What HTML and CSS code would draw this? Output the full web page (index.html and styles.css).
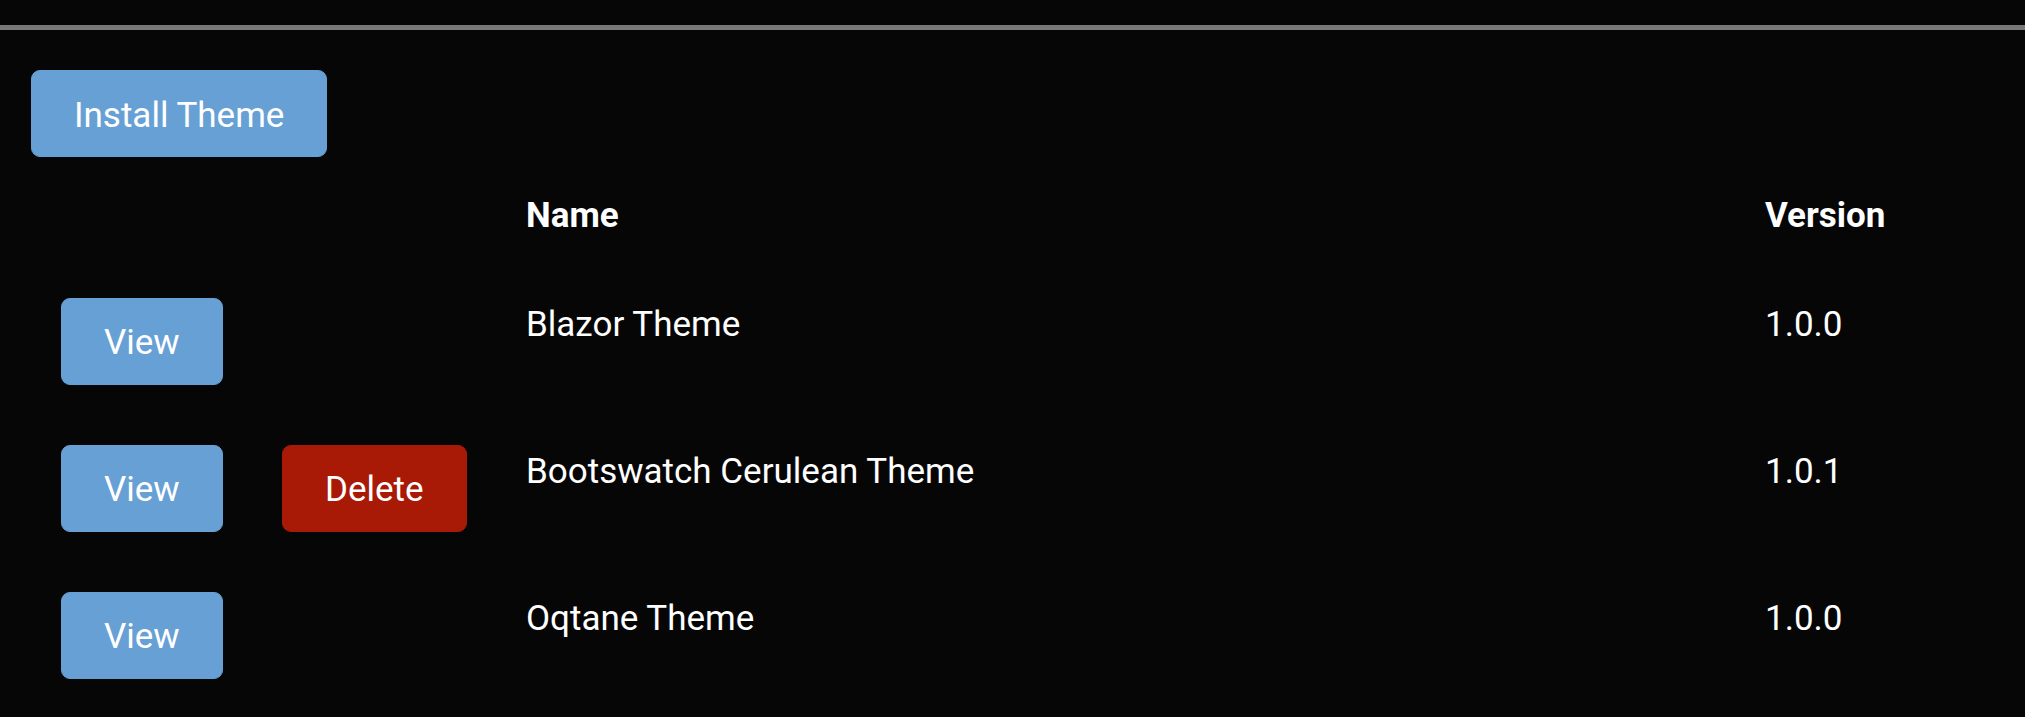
FILE: index.html
```html
<!DOCTYPE html>
<html lang="en">
<head>
<meta charset="UTF-8" />
<meta name="viewport" content="width=device-width, initial-scale=1" />
<title>Themes</title>
<link rel="stylesheet" href="styles.css">
</head>
<body>

<div class="topbar"></div>

<div class="content">
  <button class="btn btn-primary">Install Theme</button>

  <table class="theme-table">
    <thead>
      <tr>
        <th class="col-view"></th>
        <th class="col-delete"></th>
        <th class="col-name">Name</th>
        <th>Version</th>
      </tr>
    </thead>
    <tbody>
      <tr>
        <td><button class="btn btn-primary">View</button></td>
        <td></td>
        <td class="cell-text">Blazor Theme</td>
        <td class="cell-text">1.0.0</td>
      </tr>
      <tr>
        <td><button class="btn btn-primary">View</button></td>
        <td><button class="btn btn-danger">Delete</button></td>
        <td class="cell-text">Bootswatch Cerulean Theme</td>
        <td class="cell-text">1.0.1</td>
      </tr>
      <tr>
        <td><button class="btn btn-primary">View</button></td>
        <td></td>
        <td class="cell-text">Oqtane Theme</td>
        <td class="cell-text">1.0.0</td>
      </tr>
    </tbody>
  </table>
</div>

</body>
</html>
```

FILE: styles.css
```css
html, body {
  margin: 0;
  background: #060606;
}
body {
  font-family: Roboto, "Liberation Sans", sans-serif;
  font-size: 35px;
  line-height: 1.5;
  color: #fff;
}
.topbar {
  height: 25px;
  border-bottom: 5px solid #787878;
}
.content {
  padding: 40px 31px 0;
}
.btn {
  font-family: inherit;
  font-size: 35px;
  line-height: 1.5;
  color: #fff;
  border: 1px solid transparent;
  border-radius: 9px;
  padding: 18.5px 42px 14px;
  cursor: pointer;
  display: inline-block;
  vertical-align: top;
}
.btn-primary {
  background: #67a0d4;
  border-color: #67a0d4;
}
.btn-danger {
  background: #a81a06;
  border-color: #a81a06;
}
.theme-table {
  border-collapse: collapse;
  width: 100%;
  table-layout: fixed;
}
.theme-table th,
.theme-table td {
  padding: 30px 30px;
  text-align: left;
  vertical-align: top;
}
.theme-table th {
  font-weight: 700;
  padding-top: 33px;
  padding-bottom: 25px;
}
.theme-table .cell-text {
  padding-top: 31px;
  padding-bottom: 29px;
}
.col-view {
  width: 161px;
}
.col-delete {
  width: 184px;
}
.col-name {
  width: 1179px;
}
```
